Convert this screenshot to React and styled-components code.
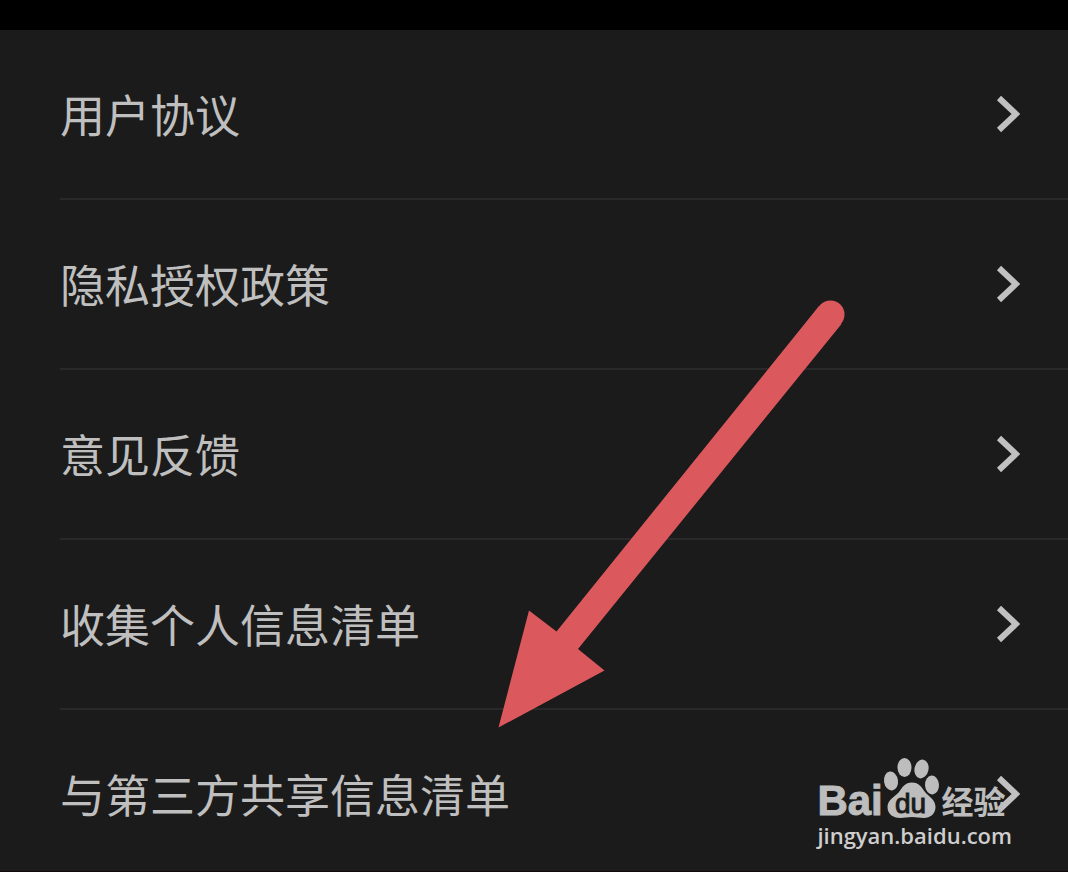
import React from "react";
import styled, { createGlobalStyle } from "styled-components";

const GlobalStyle = createGlobalStyle`
  * {
    box-sizing: border-box;
  }
  body {
    margin: 0;
    background-color: #1b1b1b;
    font-family: "Noto Sans CJK SC", sans-serif;
  }
`;

const Page = styled.main`
  position: relative;
  display: flex;
  flex-direction: column;
  min-height: 100vh;
  border-top: 30px solid #000;
  border-bottom: 1px solid #12080c;
  overflow: hidden;
`;

const Menu = styled.ul`
  list-style: none;
  margin: 0;
  padding: 0 0 0 60px;
`;

const MenuItem = styled.li`
  border-bottom: 2px solid #292929;

  &:last-child {
    border-bottom: none;
  }
`;

const MenuLink = styled.a`
  display: flex;
  align-items: center;
  justify-content: space-between;
  padding: 52px 48px 52px 0;
  color: #bfbfbf;
  font-size: 45px;
  line-height: 64px;
  text-decoration: none;

  ${MenuItem}:last-child & {
    padding-bottom: 40px;
  }
`;

const Chevron = styled.svg`
  flex: none;
  width: 24px;
  height: 38px;
  fill: none;
  stroke: #c1c1c1;
  stroke-width: 6px;
`;

const Arrow = styled.svg`
  position: absolute;
  top: 270px;
  left: 498px;
  width: 348px;
  height: 429px;
  fill: #db585d;
  pointer-events: none;
`;

const Watermark = styled.div`
  position: absolute;
  right: 56px;
  bottom: 20px;
  color: #bdbdbd;
  pointer-events: none;
`;

const Logo = styled.div`
  display: flex;
  align-items: flex-end;
  height: 62px;
`;

const Latin = styled.span`
  width: 64px;
  font-family: "Liberation Sans", sans-serif;
  font-size: 42px;
  font-weight: bold;
  line-height: 36px;
  -webkit-text-stroke: 1px #bdbdbd;
`;

const Paw = styled.svg`
  width: 60px;
  height: 62px;
  fill: #bdbdbd;

  text {
    fill: #1b1b1b;
    stroke: #1b1b1b;
    stroke-width: 1px;
    font-family: "Liberation Sans", sans-serif;
    font-size: 28px;
  }
`;

const Chinese = styled.span`
  font-size: 32px;
  font-weight: 700;
  line-height: 38px;
`;

const Site = styled.div`
  font-family: "Open Sans", sans-serif;
  font-size: 22px;
  font-weight: 600;
  line-height: 32px;
  color: #cecece;
`;

const items = ["用户协议", "隐私授权政策", "意见反馈", "收集个人信息清单", "与第三方共享信息清单"];

function App() {
  return (
    <>
      <GlobalStyle />
      <Page>
        <Menu>
          {items.map((item) => (
            <MenuItem key={item}>
              <MenuLink href="#">
                {item}
                <Chevron viewBox="0 0 24 38" aria-hidden="true">
                  <path d="M3 3 L20 19 L3 35" />
                </Chevron>
              </MenuLink>
            </MenuItem>
          ))}
        </Menu>

        <Arrow viewBox="0 0 348 429" aria-hidden="true">
          <path d="M0.500 427.500 L31 310.500 L58.500 331.500 L321 6 L343.500 24 L80 349 L106.500 370.500 Z" />
          <circle cx="332.500" cy="14.500" r="14" />
        </Arrow>

        <Watermark>
          <Logo>
            <Latin>Bai</Latin>
            <Paw viewBox="0 0 60 62">
              <ellipse cx="10" cy="24" rx="7" ry="9.500" transform="rotate(-8 10 24)" />
              <ellipse cx="23.500" cy="10.500" rx="7" ry="9.500" />
              <ellipse cx="40.500" cy="12" rx="7" ry="9.500" transform="rotate(12 40.500 12)" />
              <ellipse cx="51" cy="28" rx="7" ry="9.500" transform="rotate(-4 51 28)" />
              <path d="M31 25.500 C38 25.500 40.500 30 44 35 C48 39.500 54.500 43 54.500 50 C54.500 57 49 61 43 61 C38 61 36 60 31 60 C26 60 24 61 19 61 C12 61 6.500 57 6.500 50 C6.500 43 14 39.500 18 35 C21.500 30 24 25.500 31 25.500 Z" />
              <text x="14" y="56">du</text>
            </Paw>
            <Chinese>经验</Chinese>
          </Logo>
          <Site>jingyan.baidu.com</Site>
        </Watermark>
      </Page>
    </>
  );
}

export default App;
